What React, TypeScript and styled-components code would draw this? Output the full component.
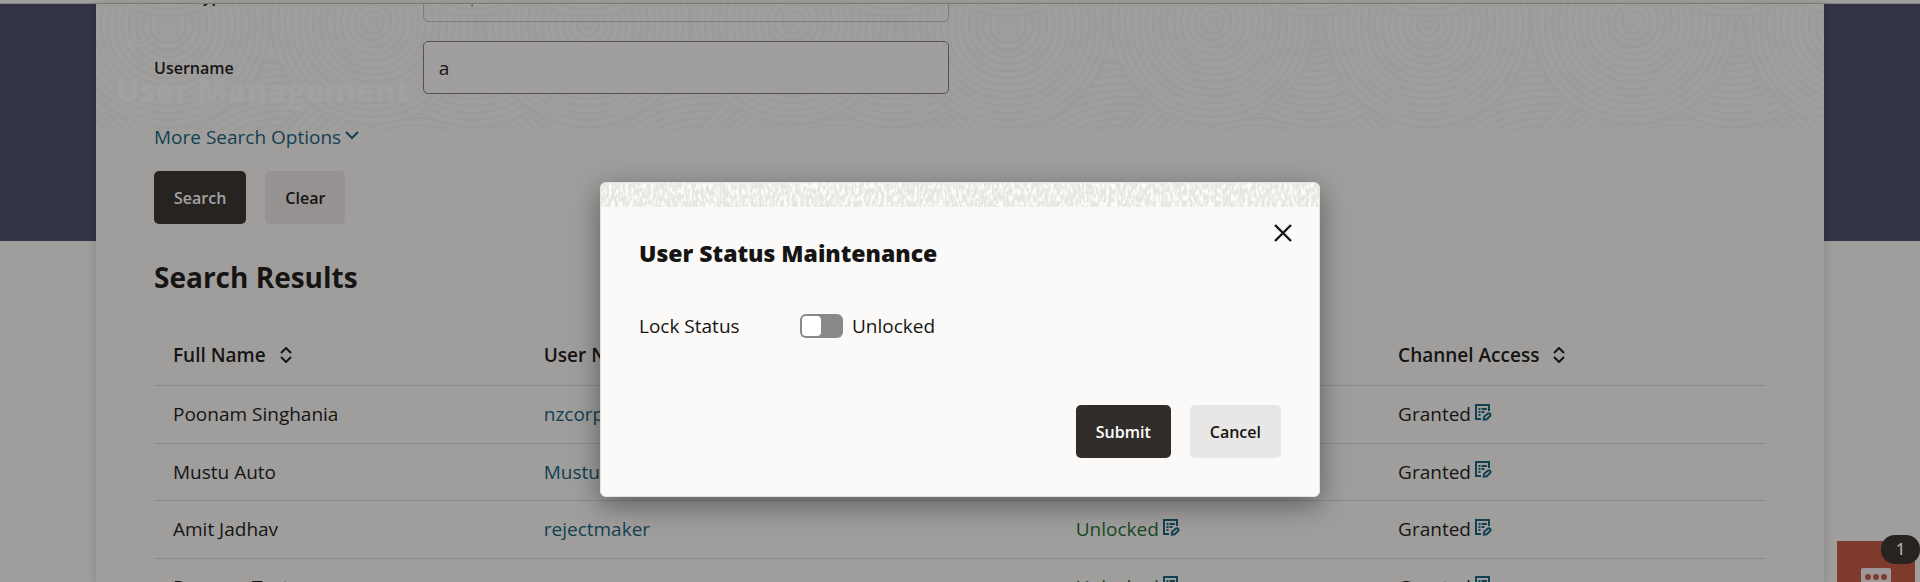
import React, { useState } from "react";
import styled, { createGlobalStyle } from "styled-components";

const ink = "#161513";
const linkColor = "#0f607a";
const paper = "#fbfaf8";

const GlobalStyle = createGlobalStyle`
  *, *::before, *::after { box-sizing: border-box; }
  body {
    margin: 0;
    background: ${paper};
    color: ${ink};
    font-family: "Open Sans", "Noto Sans", sans-serif;
    font-size: 19px;
    line-height: 28px;
  }
  button, input, select { font: inherit; color: inherit; margin: 0; }
  h1, h2, p { margin: 0; }
  a { color: inherit; text-decoration: none; }
`;

const Screen = styled.div`
  display: flex;
  flex-direction: column;
  height: 100vh;
  overflow: hidden;
`;

const TopBar = styled.header`
  flex: none;
  height: 4px;
  background: #fcfdf8;
  border-bottom: 1px solid #d0cecb;
`;

const Body = styled.main`
  flex: 1;
  min-height: 0;
  display: flex;
  justify-content: center;
  background: linear-gradient(#464a67, #464a67) top / 100% 237px no-repeat;
`;

const Panel = styled.section`
  position: relative;
  width: 90%;
  padding: 0 58px;
  background: ${paper};
  box-shadow: 0 0 10px rgba(0, 0, 0, 0.18);
`;

const Backdrop = styled.div`
  position: absolute;
  inset: 0 0 auto 0;
  height: 126px;
  overflow: hidden;
  padding: 34px 20px 0;
  color: #ffffff;

  & > svg.texture { position: absolute; inset: 0; width: 100%; height: 100%; }
`;

const BackdropArrow = styled.svg`
  position: relative;
  display: block;
  width: 20px;
  height: 14px;
  margin-left: 11px;
`;

const BackdropTitle = styled.h1`
  position: relative;
  margin-top: 16px;
  font-size: 31px;
  font-weight: 800;
  line-height: 44px;
`;

const Content = styled.div`
  position: relative;
  display: flex;
  flex-direction: column;
  align-items: stretch;
`;

const Field = styled.div<{ $clipped?: boolean }>`
  display: grid;
  grid-template-columns: 1fr 2fr 3fr;
  align-content: ${(p) => (p.$clipped ? "end" : "center")};
  height: ${(p) => (p.$clipped ? "18px" : "53px")};
  overflow: hidden;
`;

const FieldLabel = styled.label`
  padding-top: 1px;
  font-size: 16px;
  font-weight: 600;
  line-height: 52px;
`;

const ControlCell = styled.div`
  display: flex;
  padding-right: 11px;
`;

const TextInput = styled.input`
  width: 100%;
  height: 53px;
  padding: 0 15px;
  border: 1px solid #7d7b79;
  border-radius: 5px;
  background: rgba(255, 255, 255, 0.4);
  outline: none;
`;

const Select = styled.select`
  appearance: none;
  width: 100%;
  height: 53px;
  padding: 0 15px;
  border: 1px solid #c5c3c1;
  border-radius: 5px;
  background: transparent;
  opacity: 1;
  color: #a9a7a5;
`;

const FieldStack = styled.div`
  display: flex;
  flex-direction: column;
  gap: 19px;
`;

const MoreLink = styled.a`
  display: flex;
  align-items: center;
  align-self: flex-start;
  gap: 4px;
  margin-top: 29px;
  color: ${linkColor};

  svg { margin-bottom: 4px; }
`;

const ButtonRow = styled.div<{ $end?: boolean }>`
  display: flex;
  gap: 19px;
  justify-content: ${(p) => (p.$end ? "flex-end" : "flex-start")};
`;

const Button = styled.button<{ $primary?: boolean }>`
  height: 53px;
  padding: 0 20px;
  border: 0;
  border-radius: 5px;
  background: ${(p) => (p.$primary ? "#312d2a" : "#e9e7e5")};
  color: ${(p) => (p.$primary ? "#ffffff" : ink)};
  font-size: 16px;
  font-weight: 600;
`;

const SearchActions = styled(ButtonRow)`
  margin-top: 20px;
`;

const ResultsTitle = styled.h2`
  margin-top: 33px;
  font-size: 28px;
  font-weight: 700;
  line-height: 40px;
`;

const Table = styled.table`
  width: 100%;
  margin-top: 26px;
  border-collapse: collapse;
  table-layout: fixed;
  text-align: left;
`;

const HeadCell = styled.th<{ $width: string }>`
  width: ${(p) => p.$width};
  height: 62px;
  padding: 2px 19px 0;
  border-bottom: 1px solid #dddbd9;
  font-weight: 600;
`;

const Cell = styled.td`
  height: 58px;
  padding: 0 19px;
  border-bottom: 1px solid #dddbd9;
  white-space: nowrap;

  tr:nth-child(even) > & { height: 57px; }
`;

const SortButton = styled.button`
  display: flex;
  align-items: center;
  gap: 14px;
  padding: 0;
  border: 0;
  background: none;
  font-weight: 600;
`;

const ActionLine = styled.span`
  display: flex;
  align-items: center;
  gap: 4px;
`;

const StatusText = styled.span`
  color: #14702f;
`;

const TextLink = styled.a`
  color: ${linkColor};
`;

const EditButton = styled.button`
  display: flex;
  margin-bottom: 4px;
  padding: 0;
  border: 0;
  background: none;
  color: ${linkColor};
`;

const ChatButton = styled.button`
  position: fixed;
  right: 5px;
  bottom: -37px;
  display: flex;
  justify-content: center;
  width: 78px;
  height: 78px;
  padding: 27px 0 0;
  border: 0;
  background: #c3543f;
`;

const ChatBadge = styled.span`
  position: absolute;
  top: -6px;
  right: -5px;
  width: 39px;
  height: 29px;
  border-radius: 14px;
  background: #312d2a;
  color: #ffffff;
  font-size: 16px;
  font-weight: 600;
  line-height: 29px;
`;

const Overlay = styled.div`
  position: fixed;
  inset: 0;
  display: flex;
  align-items: flex-start;
  justify-content: center;
  padding: 182px 24px 0;
  background: rgba(22, 21, 19, 0.4);
`;

const Dialog = styled.div`
  position: relative;
  width: 100%;
  max-width: 720px;
  overflow: hidden;
  border: 1px solid #e5e3e1;
  border-radius: 6px;
  background: ${paper};
`;

const DialogShadow = styled.div`
  display: flex;
  width: 100%;
  max-width: 720px;
  border-radius: 6px;
  box-shadow: 0 8px 28px rgba(0, 0, 0, 0.42);
`;

const DialogStrip = styled.svg`
  display: block;
  width: 100%;
  height: 24px;
`;

const DialogBody = styled.div`
  padding: 30px 38px 38px;
`;

const DialogTitle = styled.h2`
  font-size: 23px;
  font-weight: 800;
  line-height: 32px;
`;

const CloseButton = styled.button`
  position: absolute;
  top: 41px;
  right: 27px;
  display: flex;
  padding: 0;
  border: 0;
  background: none;
`;

const StatusRow = styled.div`
  display: grid;
  grid-template-columns: 161px 1fr;
  align-items: center;
  margin: 43px 0 65px;
`;

const ToggleLabel = styled.label`
  display: flex;
  align-items: center;
  gap: 9px;
`;

const Toggle = styled.input`
  appearance: none;
  display: flex;
  width: 43px;
  height: 24px;
  padding: 2px;
  border-radius: 6px;
  background: #8b8987;

  &::before {
    content: "";
    width: 19px;
    height: 20px;
    border-radius: 4px;
    background: #ffffff;
  }
  &:checked { justify-content: flex-end; }
`;

const radii = (from: number, to: number, step: number) =>
  Array.from({ length: Math.floor((to - from) / step) + 1 }, (_, i) => to - i * step);

const Rings = ({ cx, cy, r }: { cx: number; cy: number; r: number }) => (
  <>
    {radii(4, r, 7).map((radius) => (
      <circle key={radius} cx={cx} cy={cy} r={radius} />
    ))}
  </>
);

const RingTexture = () => (
  <svg className="texture" aria-hidden="true">
    <defs>
      <pattern id="rings" x="0" width="420" height="126" patternUnits="userSpaceOnUse">
        <g fill={paper} stroke="#f5f4f1" strokeWidth="2">
          <Rings cx={190} cy={230} r={172} />
          <Rings cx={320} cy={230} r={172} />
          <Rings cx={-100} cy={230} r={172} />
          <Rings cx={610} cy={230} r={172} />
          <Rings cx={377} cy={21} r={102} />
          <Rings cx={-43} cy={21} r={102} />
          <Rings cx={72} cy={21} r={102} />
          <Rings cx={492} cy={21} r={102} />
          <Rings cx={277} cy={18} r={102} />
          <Rings cx={72} cy={-90} r={102} />
          <Rings cx={377} cy={-90} r={102} />
          <Rings cx={-43} cy={-90} r={102} />
        </g>
      </pattern>
    </defs>
    <rect width="100%" height="100%" fill="url(#rings)" />
  </svg>
);

const StripTexture = () => (
  <DialogStrip aria-hidden="true">
    <filter id="weave" x="0" y="0" width="100%" height="100%">
      <feTurbulence type="fractalNoise" baseFrequency="0.36 0.16" numOctaves={2} seed={4} />
      <feColorMatrix values="0 0 0 0 0.99  0 0 0 0 0.98  0 0 0 0 0.97  4 0 0 0 -1.7" />
    </filter>
    <rect width="100%" height="100%" fill="#e7e6e3" />
    <rect width="100%" height="100%" filter="url(#weave)" />
  </DialogStrip>
);

const ChevronDown = () => (
  <svg width="14" height="9" viewBox="0 0 14 9" fill="none" stroke="currentColor" strokeWidth="2">
    <path d="M1 1l6 6 6-6" />
  </svg>
);

const SortIcon = () => (
  <svg width="12" height="16" viewBox="0 0 12 16" fill="none" stroke="currentColor" strokeWidth="2">
    <path d="M1 6l5-5 5 5M1 10l5 5 5-5" />
  </svg>
);

const EditIcon = () => (
  <svg width="17" height="17" viewBox="0 0 17 17" fill="none" stroke="currentColor">
    <path strokeWidth="2" d="M14 7V1H1v14h5" />
    <path strokeWidth="2" d="M3.500 5h2M6.500 5h5.500M3.500 8h2M6.500 8h3M3.500 11h2" />
    <path strokeWidth="2" d="M8.800 15.500l.5-3 3.800-3c1.300-.7 3 .6 2.300 2.200l-3.600 3.500z" />
  </svg>
);

const CloseIcon = () => (
  <svg width="18" height="18" viewBox="0 0 18 18" fill="none" stroke={ink} strokeWidth="2.4">
    <path d="M1 1l16 16M17 1L1 17" />
  </svg>
);

const ChatIcon = () => (
  <svg width="30" height="30" viewBox="0 0 30 30">
    <path fill="#f5f2f0" d="M2 0h26a2 2 0 0 1 2 2v20a2 2 0 0 1-2 2H9l-6 6v-6H2a2 2 0 0 1-2-2V2a2 2 0 0 1 2-2z" />
    <circle cx="7" cy="9" r="3" fill="#c3543f" />
    <circle cx="15" cy="9" r="3" fill="#c3543f" />
    <circle cx="23" cy="9" r="3" fill="#c3543f" />
  </svg>
);

const columns = [
  { title: "Full Name", width: "23%" },
  { title: "User Name", width: "33%" },
  { title: "User Status", width: "20%" },
  { title: "Channel Access", width: "24%" },
];

const users = [
  { name: "Poonam Singhania", login: "nzcorp" },
  { name: "Mustu Auto", login: "Mustu" },
  { name: "Amit Jadhav", login: "rejectmaker" },
  { name: "Poonam Test", login: "poonam" },
];

export default function App() {
  const [username, setUsername] = useState("a");
  const [locked, setLocked] = useState(false);

  return (
    <>
      <GlobalStyle />
      <Screen>
        <TopBar />
        <Body>
          <Panel>
            <Backdrop>
              <RingTexture />
              <BackdropArrow viewBox="0 0 20 14" fill="none" stroke="currentColor" strokeWidth="2">
                <path d="M20 7H2M7 1L1 7l6 6" />
              </BackdropArrow>
              <BackdropTitle>User Management</BackdropTitle>
            </Backdrop>
            <Content>
              <FieldStack>
                <Field $clipped>
                  <FieldLabel htmlFor="user-type">User Type</FieldLabel>
                  <ControlCell>
                    <Select id="user-type" disabled>
                      <option>Corporate User</option>
                    </Select>
                  </ControlCell>
                </Field>
                <Field>
                  <FieldLabel htmlFor="username">Username</FieldLabel>
                  <ControlCell>
                    <TextInput id="username" value={username} onChange={(e) => setUsername(e.target.value)} />
                  </ControlCell>
                </Field>
              </FieldStack>
              <MoreLink href="#options">
                More Search Options
                <ChevronDown />
              </MoreLink>
              <SearchActions>
                <Button $primary>Search</Button>
                <Button>Clear</Button>
              </SearchActions>
              <ResultsTitle>Search Results</ResultsTitle>
              <Table>
                <thead>
                  <tr>
                    {columns.map((column) => (
                      <HeadCell key={column.title} $width={column.width}>
                        <SortButton>
                          {column.title}
                          <SortIcon />
                        </SortButton>
                      </HeadCell>
                    ))}
                  </tr>
                </thead>
                <tbody>
                  {users.map((user) => (
                    <tr key={user.name}>
                      <Cell>{user.name}</Cell>
                      <Cell>
                        <TextLink href="#user">{user.login}</TextLink>
                      </Cell>
                      <Cell>
                        <ActionLine>
                          <StatusText>Unlocked</StatusText>
                          <EditButton aria-label="Edit status">
                            <EditIcon />
                          </EditButton>
                        </ActionLine>
                      </Cell>
                      <Cell>
                        <ActionLine>
                          Granted
                          <EditButton aria-label="Edit channel access">
                            <EditIcon />
                          </EditButton>
                        </ActionLine>
                      </Cell>
                    </tr>
                  ))}
                </tbody>
              </Table>
            </Content>
          </Panel>
        </Body>
      </Screen>
      <ChatButton aria-label="Chat">
        <ChatIcon />
        <ChatBadge>1</ChatBadge>
      </ChatButton>
      <Overlay>
        <DialogShadow>
          <Dialog role="dialog" aria-labelledby="dialog-title">
            <StripTexture />
            <CloseButton aria-label="Close">
              <CloseIcon />
            </CloseButton>
            <DialogBody>
              <DialogTitle id="dialog-title">User Status Maintenance</DialogTitle>
              <StatusRow>
                <label htmlFor="lock-status">Lock Status</label>
                <ToggleLabel>
                  <Toggle
                    id="lock-status"
                    type="checkbox"
                    checked={locked}
                    onChange={(e) => setLocked(e.target.checked)}
                  />
                  {locked ? "Locked" : "Unlocked"}
                </ToggleLabel>
              </StatusRow>
              <ButtonRow $end>
                <Button $primary>Submit</Button>
                <Button>Cancel</Button>
              </ButtonRow>
            </DialogBody>
          </Dialog>
        </DialogShadow>
      </Overlay>
    </>
  );
}
